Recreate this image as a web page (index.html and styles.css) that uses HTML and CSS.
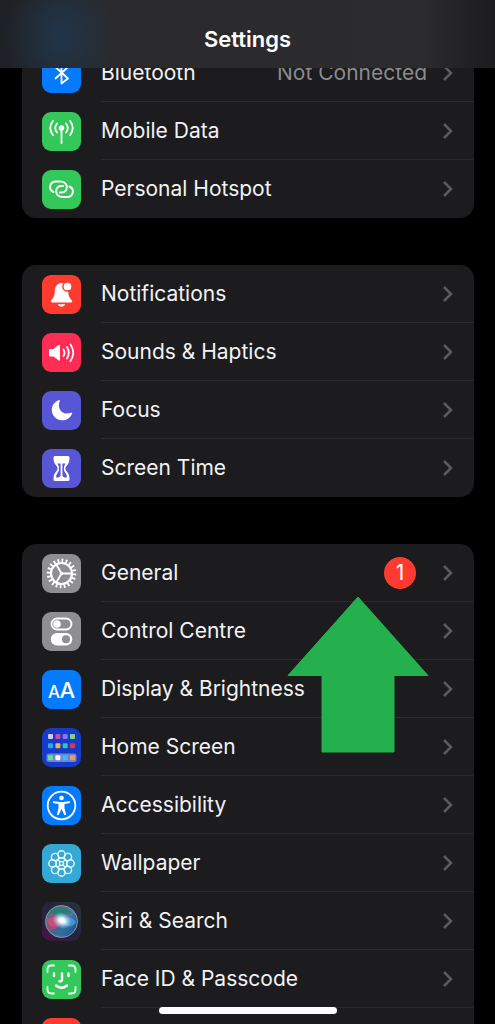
FILE: index.html
```html
<!DOCTYPE html>
<html lang="en-GB">
<head>
<meta charset="utf-8">
<meta name="viewport" content="width=device-width, initial-scale=1">
<title>Settings</title>
<link rel="stylesheet" href="styles.css">
</head>
<body>
<div class="screen">
  <header class="topbar"><h1 class="title">Settings</h1></header>
  <main class="list">
    <nav class="group group-cut" aria-label="Connectivity">
      <a class="row" href="#bluetooth">
        <svg class="tile blue" viewBox="0 0 39 39" aria-hidden="true"><path class="line" d="M13.500 13L26 24.500L19.500 29.500V8L26 13L13.500 24.500"/></svg>
        <span class="cell"><span class="label">Bluetooth</span><span class="value">Not Connected</span><svg class="chevron" viewBox="0 0 11 18" aria-hidden="true"><path d="M2 2L9 9L2 16"/></svg></span>
      </a>
      <a class="row" href="#mobile-data">
        <svg class="tile green" viewBox="0 0 39 39" aria-hidden="true"><circle class="solid" cx="19.500" cy="16" r="2.800"/><path class="line" d="M19.500 17V31M15 11.500Q11.500 16 15 20.500M24 11.500Q27.500 16 24 20.500M11 8.700Q5.500 16 11 23.300M28 8.700Q33.500 16 28 23.300"/></svg>
        <span class="cell"><span class="label">Mobile Data</span><svg class="chevron" viewBox="0 0 11 18" aria-hidden="true"><path d="M2 2L9 9L2 16"/></svg></span>
      </a>
      <a class="row" href="#hotspot">
        <svg class="tile green" viewBox="0 0 39 39" aria-hidden="true"><path class="line wide" d="M11.500 22C6 19.500 7.500 11.500 14 11.500H18.500C26.500 11.500 27 22.500 19.500 22.500H18"/><path class="line wide" d="M27.500 16.500C33 19 31.500 27 25 27H20.500C12.500 27 12 16 19.500 16H21"/></svg>
        <span class="cell"><span class="label">Personal Hotspot</span><svg class="chevron" viewBox="0 0 11 18" aria-hidden="true"><path d="M2 2L9 9L2 16"/></svg></span>
      </a>
    </nav>

    <nav class="group" aria-label="Alerts and focus">
      <a class="row" href="#notifications">
        <svg class="tile red" viewBox="0 0 39 39" aria-hidden="true"><path class="solid" d="M19.500 8C14.500 8.500 13 12 12.800 16C12.600 20.500 12 22 9.500 25C8.300 26.500 8.800 27.500 10 27.500H29C30.500 27.500 30.700 26.300 29.500 25C27 22 26.400 20.500 26.200 16C26 11 23.500 8 19.500 8ZM15.800 29.200H23.200C22.300 32.500 16.700 32.500 15.800 29.200Z"/><circle class="bell-dot" cx="25.500" cy="11.500" r="4.600"/></svg>
        <span class="cell"><span class="label">Notifications</span><svg class="chevron" viewBox="0 0 11 18" aria-hidden="true"><path d="M2 2L9 9L2 16"/></svg></span>
      </a>
      <a class="row" href="#sounds">
        <svg class="tile pink" viewBox="0 0 39 39" aria-hidden="true"><path class="solid" d="M8 16H11.500L16.500 12Q18 11 18 13V26.500Q18 28.500 16.500 27.300L11.500 23.500H8Q7 23.500 7 22.500V17Q7 16 8 16Z"/><path class="line" d="M21.500 16.500Q23.500 19.700 21.500 23M25 14Q28.500 19.700 25 25.500M28.500 11.500Q34 19.700 28.500 28"/></svg>
        <span class="cell"><span class="label">Sounds &amp; Haptics</span><svg class="chevron" viewBox="0 0 11 18" aria-hidden="true"><path d="M2 2L9 9L2 16"/></svg></span>
      </a>
      <a class="row" href="#focus">
        <svg class="tile indigo" viewBox="0 0 39 39" aria-hidden="true"><path class="solid" d="M16.600 9.300C17.500 8.800 18 9.300 17.700 10.200C14.500 18 21 25 29 21.800C30 21.500 30.500 22 30 23C27.500 28 23.500 29.500 20 29.300C14.500 29 9.800 25 9.800 19C9.800 14.500 12.500 11 16.600 9.300Z"/></svg>
        <span class="cell"><span class="label">Focus</span><svg class="chevron" viewBox="0 0 11 18" aria-hidden="true"><path d="M2 2L9 9L2 16"/></svg></span>
      </a>
      <a class="row" href="#screen-time">
        <svg class="tile indigo" viewBox="0 0 39 39" aria-hidden="true"><path class="solid" d="M13 7H26Q27.500 7 27.500 8.500C27.500 13 26.500 14.500 24.500 17C23 18.800 23 20.500 24.500 22C26.500 24.500 27.500 26 27.500 30.500Q27.500 32 26 32H13Q11.500 32 11.500 30.500C11.500 26 12.500 24.500 14.500 22C16 20.500 16 18.800 14.500 17C12.500 14.500 11.500 13 11.500 8.500Q11.500 7 13 7Z"/><path class="sand" d="M15.500 14.500H23.500C21.500 17.500 21.300 21.500 23.500 24C24.500 25.500 25 27 25 28.500H22.500L19.500 26.500L16.500 28.500H14C14 27 14.500 25.500 15.500 24C17.700 21.500 17.500 17.500 15.500 14.500Z"/><path class="line" d="M19.500 14V28"/></svg>
        <span class="cell"><span class="label">Screen Time</span><svg class="chevron" viewBox="0 0 11 18" aria-hidden="true"><path d="M2 2L9 9L2 16"/></svg></span>
      </a>
    </nav>

    <nav class="group" aria-label="Device">
      <a class="row" href="#general">
        <svg class="tile grey" viewBox="0 0 39 39" aria-hidden="true"><circle class="teeth" cx="19.500" cy="19.500" r="13" pathLength="180"/><circle class="gear" cx="19.500" cy="19.500" r="10.500"/><path class="line" d="M19.500 19.500H30M19.500 19.500L14.300 10.500M19.500 19.500L14.300 28.500"/><circle class="solid" cx="19.500" cy="19.500" r="1.800"/></svg>
        <span class="cell"><span class="label">General</span><span class="badge">1</span><svg class="chevron" viewBox="0 0 11 18" aria-hidden="true"><path d="M2 2L9 9L2 16"/></svg></span>
      </a>
      <a class="row" href="#control-centre">
        <svg class="tile grey" viewBox="0 0 39 39" aria-hidden="true"><rect class="line" x="9.500" y="6.500" width="20" height="11" rx="5.500"/><circle class="solid" cx="15" cy="12" r="3.800"/><rect class="solid" x="8.800" y="21" width="21.500" height="12.500" rx="6.250"/><circle class="knob" cx="24" cy="27.200" r="4"/></svg>
        <span class="cell"><span class="label">Control Centre</span><svg class="chevron" viewBox="0 0 11 18" aria-hidden="true"><path d="M2 2L9 9L2 16"/></svg></span>
      </a>
      <a class="row" href="#display">
        <svg class="tile blue" viewBox="0 0 39 39" aria-hidden="true"><text class="letter" x="6" y="27.500" font-size="17">A</text><text class="letter" x="17.500" y="27.500" font-size="22">A</text></svg>
        <span class="cell"><span class="label">Display &amp; Brightness</span><svg class="chevron" viewBox="0 0 11 18" aria-hidden="true"><path d="M2 2L9 9L2 16"/></svg></span>
      </a>
      <a class="row" href="#home-screen">
        <svg class="tile navy" viewBox="0 0 39 39" aria-hidden="true"><rect x="4.500" y="25.500" width="30" height="8.500" rx="2.500" fill="#6f83d8"/><g><rect x="6" y="6" width="5" height="5" rx="1" fill="#cfc8ff"/><rect x="13.400" y="6" width="5" height="5" rx="1" fill="#d8489c"/><rect x="20.700" y="6" width="5" height="5" rx="1" fill="#9570f4"/><rect x="28" y="6" width="5" height="5" rx="1" fill="#7fd67c"/><rect x="6" y="15.300" width="5" height="5" rx="1" fill="#25abf0"/><rect x="13.400" y="15.300" width="5" height="5" rx="1" fill="#e8b93e"/><rect x="20.700" y="15.300" width="5" height="5" rx="1" fill="#2cc5c0"/><rect x="28" y="15.300" width="5" height="5" rx="1" fill="#d43b52"/><rect x="6" y="27.300" width="5" height="5" rx="1" fill="#62df92"/><rect x="13.400" y="27.300" width="5" height="5" rx="1" fill="#fff"/><rect x="20.700" y="27.300" width="5" height="5" rx="1" fill="#36bdf4"/><rect x="28" y="27.300" width="5" height="5" rx="1" fill="#f09a64"/></g></svg>
        <span class="cell"><span class="label">Home Screen</span><svg class="chevron" viewBox="0 0 11 18" aria-hidden="true"><path d="M2 2L9 9L2 16"/></svg></span>
      </a>
      <a class="row" href="#accessibility">
        <svg class="tile blue" viewBox="0 0 39 39" aria-hidden="true"><circle class="line" cx="19.500" cy="19.500" r="13.800"/><circle class="solid" cx="19.500" cy="12" r="2.300"/><path class="solid" d="M12 15.200L18 16H21L27 15.200Q28.300 15.300 28.200 16.300Q28.100 17 27 17.200L22.500 18V22L24 28Q24 29.300 23.200 29.300Q22.500 29.300 22 28.300L19.500 23L17 28.300Q16.500 29.300 15.800 29.300Q15 29.300 15 28L16.500 22V18L12 17.200Q10.900 17 10.800 16.300Q10.700 15.300 12 15.200Z"/></svg>
        <span class="cell"><span class="label">Accessibility</span><svg class="chevron" viewBox="0 0 11 18" aria-hidden="true"><path d="M2 2L9 9L2 16"/></svg></span>
      </a>
      <a class="row" href="#wallpaper">
        <svg class="tile cyan" viewBox="0 0 39 39" aria-hidden="true"><g class="petals"><circle cx="19.500" cy="10.500" r="3.700"/><circle cx="25.900" cy="13.100" r="3.700"/><circle cx="28.500" cy="19.500" r="3.700"/><circle cx="25.900" cy="25.900" r="3.700"/><circle cx="19.500" cy="28.500" r="3.700"/><circle cx="13.100" cy="25.900" r="3.700"/><circle cx="10.500" cy="19.500" r="3.700"/><circle cx="13.100" cy="13.100" r="3.700"/><circle cx="19.500" cy="19.500" r="5.500"/><circle cx="19.500" cy="19.500" r="2"/><path d="M17.800 17.800L15.600 15.600M21.200 17.800L23.400 15.600M21.200 21.200L23.400 23.400M17.800 21.200L15.600 23.400"/></g></svg>
        <span class="cell"><span class="label">Wallpaper</span><svg class="chevron" viewBox="0 0 11 18" aria-hidden="true"><path d="M2 2L9 9L2 16"/></svg></span>
      </a>
      <a class="row" href="#siri">
        <svg class="tile" viewBox="0 0 39 39" aria-hidden="true">
          <defs>
            <linearGradient id="siri-bg" x1="0" y1="1" x2="1" y2="0"><stop offset="0" stop-color="#461345"/><stop offset=".5" stop-color="#24243d"/><stop offset="1" stop-color="#28333a"/></linearGradient>
            <linearGradient id="siri-orb" x1="0" y1=".2" x2="1" y2=".8"><stop offset="0" stop-color="#3c7b7c"/><stop offset=".35" stop-color="#a04a78"/><stop offset=".6" stop-color="#5b74a8"/><stop offset="1" stop-color="#164a91"/></linearGradient>
            <radialGradient id="siri-glow"><stop offset="0" stop-color="#fff"/><stop offset=".3" stop-color="#e8f8ff"/><stop offset="1" stop-color="#9bdcf2" stop-opacity="0"/></radialGradient>
          </defs>
          <rect width="39" height="39" fill="url(#siri-bg)"/><circle cx="19.500" cy="19.500" r="16" fill="url(#siri-orb)" stroke="#6aa5ac"/><path d="M8 9C15 3 26 5 30 11C25 11 21 14 19 18C15 12 11 11 8 9Z" fill="#267e78"/><path d="M5 19C8 13 15 16 20 20C14 27 8 27 5 19Z" fill="#d6487c" opacity=".8"/><path d="M19 20C24 14 31 15 34 20C31 26 23 25 19 20Z" fill="#38a9e0" opacity=".75"/><path d="M7 28C14 29 17 24 21 19C24 26 29 27 32 27C25 35 14 36 7 28Z" fill="#176c92" opacity=".6"/><ellipse cx="20" cy="18.500" rx="10" ry="8" fill="url(#siri-glow)" transform="rotate(25 20 18.500)"/>
        </svg>
        <span class="cell"><span class="label">Siri &amp; Search</span><svg class="chevron" viewBox="0 0 11 18" aria-hidden="true"><path d="M2 2L9 9L2 16"/></svg></span>
      </a>
      <a class="row" href="#face-id">
        <svg class="tile green" viewBox="0 0 39 39" aria-hidden="true"><path class="line" d="M5.500 12V9.500Q5.500 5.500 9.500 5.500H12M27 5.500H29.500Q33.500 5.500 33.500 9.500V12M33.500 27V29.500Q33.500 33.500 29.500 33.500H27M12 33.500H9.500Q5.500 33.500 5.500 29.500V27"/><path class="line bold" d="M12 13.500V16M26.500 13.500V16M20 13.500V19.500Q20 21.500 17.500 21.200M14 25.500Q19.500 30 25 25.500"/></svg>
        <span class="cell"><span class="label">Face ID &amp; Passcode</span><svg class="chevron" viewBox="0 0 11 18" aria-hidden="true"><path d="M2 2L9 9L2 16"/></svg></span>
      </a>
      <a class="row" href="#emergency" aria-hidden="true">
        <svg class="tile red" viewBox="0 0 39 39"></svg>
        <span class="cell"></span>
      </a>
      <svg class="pointer" viewBox="0 0 142 157" aria-hidden="true"><path d="M71 1L141 79.500H107V156H35V79.500H1Z"/></svg>
    </nav>
  </main>
  <div class="home-bar"></div>
</div>
</body>
</html>
```
FILE: styles.css
```css
* { box-sizing: border-box; }

body {
  margin: 0;
  background: #000;
  color: #f2f2f4;
  font-family: Inter, "Liberation Sans", sans-serif;
}

.screen {
  position: relative;
  height: 100vh;
  overflow: hidden;
}

.topbar {
  position: relative;
  z-index: 2;
  display: flex;
  justify-content: center;
  padding: 24px 0 14px;
  background:
    radial-gradient(ellipse 56px 70px at 60px 36px, #20354a, #20354a00),
    linear-gradient(90deg, #1d2024 0, #2a2a2d 100px, #2c2c2e 85%, #1c1c1e 100%);
}

.title {
  margin: 0;
  color: #fff;
  font-size: 22px;
  font-weight: 600;
  line-height: 30px;
}

.list {
  display: flex;
  flex-direction: column;
  gap: 47px;
  margin-top: -24px;
  padding: 0 21px 0 22px;
}

.group {
  position: relative;
  border-radius: 14px;
  background: #1c1c1e;
}

.group-cut { border-radius: 0 0 14px 14px; }

.row {
  display: flex;
  align-items: center;
  gap: 20px;
  height: 58px;
  padding-left: 20px;
  color: inherit;
  text-decoration: none;
}

.cell {
  flex: 1;
  display: flex;
  align-items: center;
  height: 58px;
  padding-right: 21px;
  border-bottom: 1px solid #2c2c2e;
}

.row:last-of-type .cell { border-bottom-color: transparent; }

.label {
  flex: 1;
  font-size: 21px;
  line-height: 28px;
  white-space: nowrap;
}

.value {
  margin-right: 15px;
  color: #8a8a8f;
  font-size: 21px;
  line-height: 28px;
}

.badge {
  width: 32px;
  margin-right: 26px;
  border-radius: 16px;
  background: #ff3b30;
  color: #fff;
  font-size: 21px;
  line-height: 32px;
  text-align: center;
}

.chevron {
  width: 11px;
  height: 18px;
  fill: none;
  stroke: #5b5b60;
  stroke-width: 2.5;
}

.tile {
  flex: none;
  width: 39px;
  height: 39px;
  border-radius: 9px;
}

.blue { background: #047aff; }
.green { background: #34c759; }
.red { background: #ff3b30; }
.pink { background: #ff2d55; }
.indigo { background: #5856d6; }
.grey { background: #8e8e93; }
.navy { background: #173bc9; }
.cyan { background: #36a8d6; }

.solid { fill: #fff; }

.line {
  fill: none;
  stroke: #fff;
  stroke-width: 1.8;
  stroke-linecap: round;
  stroke-linejoin: round;
}

.wide { stroke-width: 2; }
.bold { stroke-width: 2.4; }

.bell-dot {
  fill: #fff;
  stroke: #ff3b30;
  stroke-width: 1.5;
}

.sand { fill: #5856d6; }
.knob { fill: #8e8e93; }

.gear {
  fill: none;
  stroke: #fff;
  stroke-width: 2.2;
}

.teeth {
  fill: none;
  stroke: #fff;
  stroke-width: 3.6;
  stroke-dasharray: 4 5;
}

.letter {
  fill: #fff;
  font-family: Inter, "Liberation Sans", sans-serif;
  font-weight: 500;
}

.petals {
  fill: none;
  stroke: #e2fbff;
  stroke-width: 1.4;
}

.pointer {
  position: absolute;
  top: 52px;
  right: 45px;
  width: 142px;
  height: 157px;
  fill: #24b14d;
  stroke: #24b14d;
  stroke-width: 1;
  stroke-linejoin: round;
}

.home-bar {
  position: absolute;
  bottom: 10px;
  left: 50%;
  z-index: 3;
  width: 178px;
  height: 7px;
  border-radius: 4px;
  background: #fff;
  transform: translateX(-50%);
}
```
